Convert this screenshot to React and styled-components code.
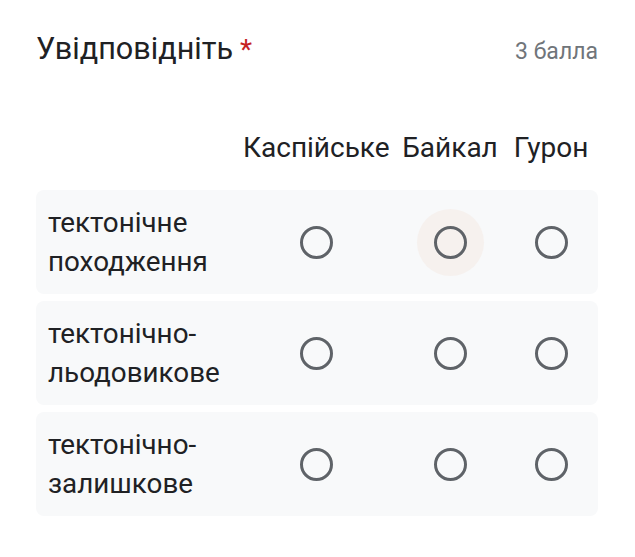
import styled, { createGlobalStyle } from "styled-components"

const GlobalStyle = createGlobalStyle`
    body {
        margin: 0;
        background: #fff;
        font-family: Roboto, "Noto Sans", Arial, sans-serif;
    }
`

const columns = ['Каспійське', 'Байкал', 'Гурон']

const rows = [
    { label: ['тектонічне', 'походження'], hover: 1 },
    { label: ['тектонічно-', 'льодовикове'], hover: -1 },
    { label: ['тектонічно-', 'залишкове'], hover: -1 },
]

export default function App() {
    return (
        <>
            <GlobalStyle />
            <Card>
                <Header>
                    <Title>Увідповідніть<Required>*</Required></Title>
                    <Points>3 балла</Points>
                </Header>

                <Grid>
                    <ColHead />
                    {columns.map(col => <ColHead key={col}>{col}</ColHead>)}
                </Grid>

                <Rows>
                    {rows.map((row, i) => (
                        <Row key={i}>
                            <Label>{row.label[0]}<br />{row.label[1]}</Label>
                            {columns.map((col, j) => (
                                <Cell key={col}>
                                    <Halo $active={row.hover === j}>
                                        <Radio />
                                    </Halo>
                                </Cell>
                            ))}
                        </Row>
                    ))}
                </Rows>
            </Card>
        </>
    )
}

const Card = styled.div`
    padding: 29px 37px 40px 36px;
`

const Header = styled.div`
    display: flex;
    justify-content: space-between;
    align-items: baseline;
`

const Title = styled.div`
    font-size: 30.6px;
    line-height: 40px;
    color: #202124;
`

const Required = styled.span`
    color: #c5221f;
    font-size: 28px;
    margin-left: 7px;
`

const Points = styled.div`
    font-size: 23px;
    color: #70757a;
`

const Grid = styled.div`
    display: grid;
    grid-template-columns: 207px 146px 122px 80px;
    margin-top: 58px;
`

const ColHead = styled.div`
    font-size: 28px;
    line-height: 40px;
    color: #202124;
    text-align: center;
    white-space: nowrap;
`

const Rows = styled.div`
    display: flex;
    flex-direction: column;
    gap: 7px;
    margin-top: 22px;
`

const Row = styled.div`
    display: grid;
    grid-template-columns: 207px 146px 122px 80px;
    align-items: center;
    height: 104px;
    background: #f8f9fa;
    border-radius: 8px;
`

const Label = styled.div`
    padding-left: 12px;
    font-size: 27.8px;
    line-height: 39px;
    color: #202124;
`

const Cell = styled.div`
    display: flex;
    justify-content: center;
    align-items: center;
`

const Halo = styled.div`
    width: 67px;
    height: 67px;
    border-radius: 50%;
    display: flex;
    justify-content: center;
    align-items: center;
    background: ${props => props.$active ? '#f6f1ee' : 'transparent'};
`

const Radio = styled.div`
    width: 27px;
    height: 27px;
    border: 3px solid #5f6368;
    border-radius: 50%;
`
